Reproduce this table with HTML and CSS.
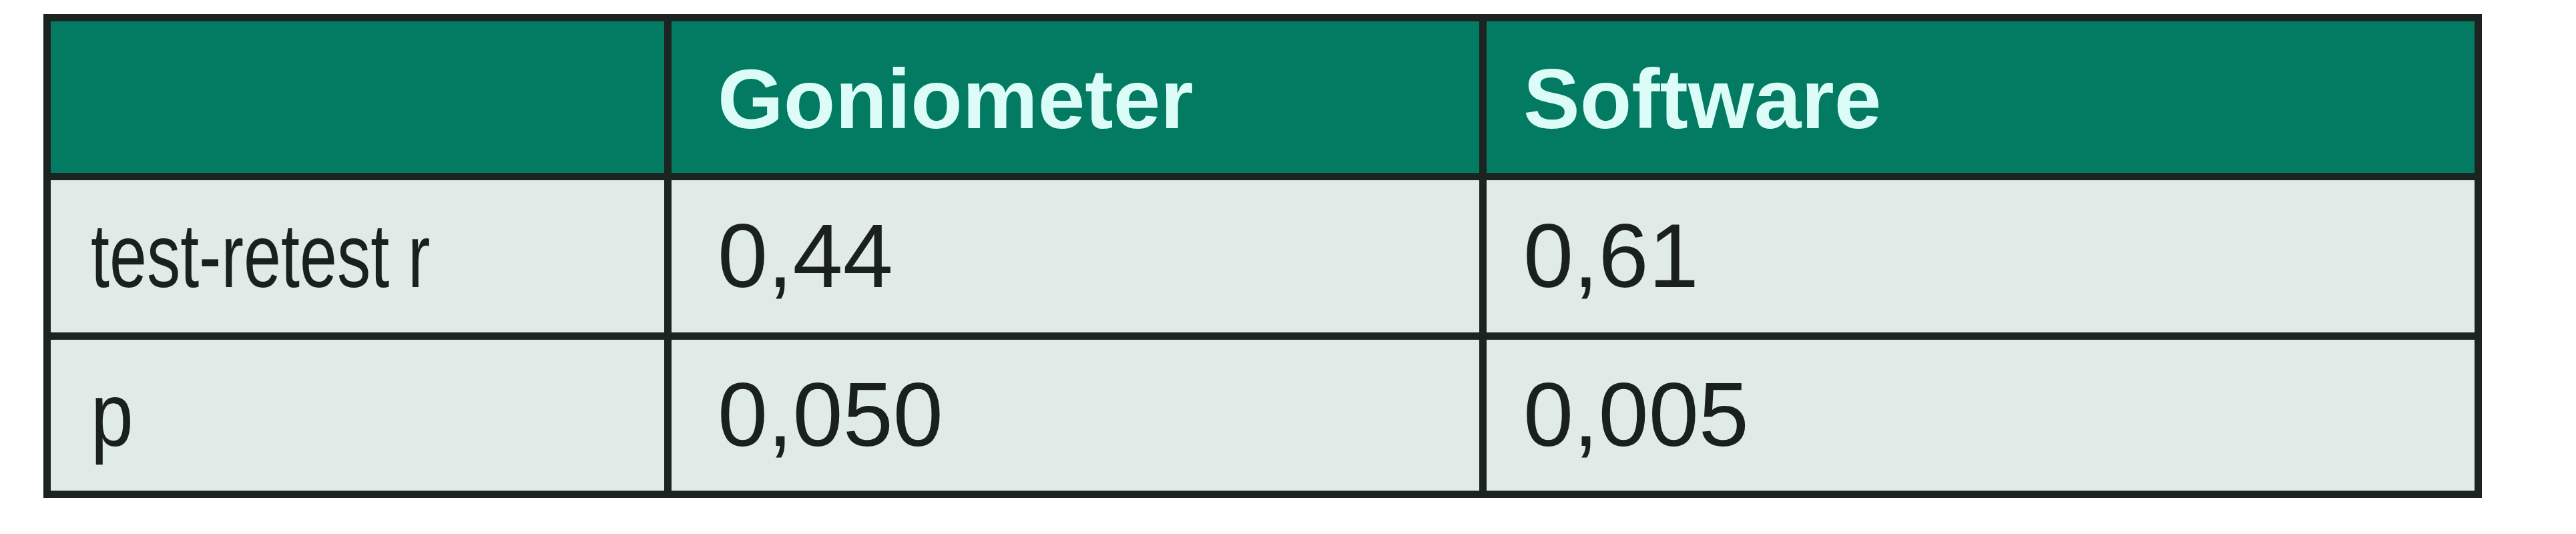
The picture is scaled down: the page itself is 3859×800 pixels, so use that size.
FILE: index.html
```html
<!DOCTYPE html>
<html lang="en">
<head>
<meta charset="utf-8">
<title>Goniometer vs Software</title>
<link rel="stylesheet" href="styles.css">
</head>
<body>
<table class="results">
  <thead>
    <tr class="head-row">
      <th class="c1"></th>
      <th class="c2">Goniometer</th>
      <th class="c3">Software</th>
    </tr>
  </thead>
  <tbody>
    <tr class="row-a">
      <td class="c1 label"><span class="cond">test-retest r</span></td>
      <td class="c2 num">0,44</td>
      <td class="c3 num">0,61</td>
    </tr>
    <tr class="row-b">
      <td class="c1 label"><span class="cond-p">p</span></td>
      <td class="c2 num">0,050</td>
      <td class="c3 num">0,005</td>
    </tr>
  </tbody>
</table>
</body>
</html>
```

FILE: styles.css
```css
html, body {
  margin: 0;
  padding: 0;
  background: #ffffff;
}

body {
  font-family: "Liberation Sans", Arial, sans-serif;
}

.results {
  margin: 21px 0 0 65px;
  width: 3653px;
  table-layout: fixed;
  border-collapse: separate;
  border-spacing: 11px;
  background: #1b2421;
}

.results th,
.results td {
  box-sizing: border-box;
  vertical-align: middle;
  text-align: left;
  white-space: nowrap;
  padding: 0;
}

.results .c1 { width: 919px; padding-left: 60px; }
.results .c2 { width: 1210px; padding-left: 69px; }
.results .c3 { width: 1480px; padding-left: 55px; }

.head-row th {
  height: 227px;
  background: #037b63;
  color: #dcfdf7;
  font-family: "Liberation Sans", Arial, sans-serif;
  font-weight: bold;
  font-size: 127px;
  line-height: 1.1;
  padding-top: 6px;
}

.row-a td { height: 228px; }
.row-b td { height: 226px; }

.results td {
  background: #e0ebe7;
  color: #1a201e;
  line-height: 1.1;
}

.label {
  font-family: "Liberation Sans", Arial, sans-serif;
  font-size: 135px;
}

.cond {
  display: inline-block;
  transform: scaleX(0.745);
  transform-origin: left center;
}

.cond-p {
  display: inline-block;
  transform: scaleX(0.85);
  transform-origin: left center;
}

.num {
  font-family: "Liberation Sans", Arial, sans-serif;
  font-size: 135px;
}
```
